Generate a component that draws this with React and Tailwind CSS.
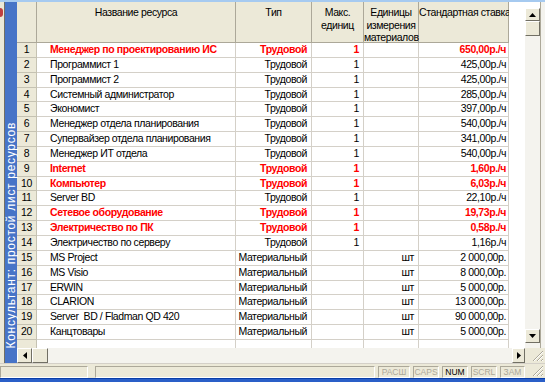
const rows = [
  ["Менеджер по проектированию ИС", "Трудовой", "1", "", "650,00р./ч", true],
  ["Программист 1", "Трудовой", "1", "", "425,00р./ч"],
  ["Программист 2", "Трудовой", "1", "", "425,00р./ч"],
  ["Системный администратор", "Трудовой", "1", "", "285,00р./ч"],
  ["Экономист", "Трудовой", "1", "", "397,00р./ч"],
  ["Менеджер отдела планирования", "Трудовой", "1", "", "540,00р./ч"],
  ["Супервайзер отдела планирования", "Трудовой", "1", "", "341,00р./ч"],
  ["Менеджер ИТ отдела", "Трудовой", "1", "", "540,00р./ч"],
  ["Internet", "Трудовой", "1", "", "1,60р./ч", true],
  ["Компьютер", "Трудовой", "1", "", "6,03р./ч", true],
  ["Server BD", "Трудовой", "1", "", "22,10р./ч"],
  ["Сетевое оборудование", "Трудовой", "1", "", "19,73р./ч", true],
  ["Электричество по ПК", "Трудовой", "1", "", "0,58р./ч", true],
  ["Электричество по серверу", "Трудовой", "1", "", "1,16р./ч"],
  ["MS Project", "Материальный", "", "шт", "2 000,00р."],
  ["MS Visio", "Материальный", "", "шт", "8 000,00р."],
  ["ERWIN", "Материальный", "", "шт", "5 000,00р."],
  ["CLARION", "Материальный", "", "шт", "13 000,00р."],
  ["Server  BD / Fladman QD 420", "Материальный", "", "шт", "90 000,00р."],
  ["Канцтовары", "Материальный", "", "шт", "5 000,00р."],
];

function Arrow({ dir }) {
  const pts = {
    up: "0,4 7,4 3.5,0",
    down: "0,0 7,0 3.5,4",
    left: "4,0 4,7 0,3.5",
    right: "0,0 0,7 4,3.5",
  }[dir];
  const vertical = dir === "up" || dir === "down";
  return (
    <svg width={vertical ? 7 : 4} height={vertical ? 4 : 7}>
      <polygon points={pts} fill="#000" />
    </svg>
  );
}

const raised =
  "bg-[#ece9d8] border-t border-l border-t-white border-l-white border-r border-b border-r-[#716f64] border-b-[#716f64]";
const sunken =
  "border-t border-l border-t-[#aca899] border-l-[#aca899] border-r border-b border-r-white border-b-white";

function Btn({ dir, className = "" }) {
  return (
    <div className={`flex items-center justify-center ${raised} ${className}`}>
      <Arrow dir={dir} />
    </div>
  );
}

function Grip() {
  return (
    <svg width="12" height="12" className="absolute right-[1px] bottom-[1px]">
      <path d="M11 1 L1 11 M11 5 L5 11 M11 9 L9 11" stroke="#aca899" strokeWidth="1" />
      <path d="M11 2 L2 11 M11 6 L6 11 M11 10 L10 11" stroke="#fff" strokeWidth="1" />
    </svg>
  );
}

const cell = "border-r border-b border-[#d4d0c8] h-full flex items-center whitespace-nowrap overflow-hidden";
const head = "bg-[#ece9d8] border-r border-b border-[#aca899] text-center pt-[4px] leading-[12.5px] whitespace-nowrap";

export default function App() {
  return (
    <div className="w-[545px] h-[382px] flex flex-col bg-[#ece9d8] overflow-hidden text-[10.5px] tracking-[-0.4px] text-black font-['Liberation_Sans',Arial,sans-serif]">
      <div className="h-[2px] bg-[#a6caf0]" />
      <div className="flex h-[361px]">
        <div className="w-[5px] border-r border-[#716f64] relative">
          <div className="absolute left-0 top-[6px] w-[3px] h-[9px] bg-[#c04040] rounded-r-sm" />
        </div>
        <div className="w-[12px] bg-[#4774c7] flex flex-col justify-end items-center pb-[15px]">
          <div className="[writing-mode:vertical-rl] rotate-180 text-white text-[12px] tracking-[0.7px] whitespace-nowrap leading-[12px]">
            Консультант: простой лист ресурсов
          </div>
        </div>
        <div className="w-[508px] flex flex-col">
          <div className="h-[346px] bg-white overflow-hidden">
            <div className="flex h-[41px]">
              <div className={`w-[20px] ${head}`} />
              <div className={`w-[199px] ${head}`}>Название ресурса</div>
              <div className={`w-[76px] ${head}`}>Тип</div>
              <div className={`w-[52px] ${head}`}>Макс.<br />единиц</div>
              <div className={`w-[55px] ${head}`}>Единицы<br />измерения<br />материалов</div>
              <div className={`w-[90px] ${head}`}>Стандартная ставка</div>
              <div className="flex-1 bg-white" />
            </div>
            {rows.map(([name, type, max, unit, rate, red], i) => {
              const tc = red ? "text-[#ff0000] font-bold" : "";
              return (
                <div key={i} className="flex h-[14.85px]">
                  <div className="w-[20px] bg-[#ece9d8] border-r border-b border-[#c5c2b2] h-full flex items-center justify-center">{i + 1}</div>
                  <div className={`w-[199px] pl-[13px] ${cell} ${tc}`}>{name.replace(/  /g, "\u00a0 ")}</div>
                  <div className={`w-[76px] justify-end pr-[4px] ${cell} ${tc}`}>{type}</div>
                  <div className={`w-[52px] justify-end pr-[4px] ${cell} ${tc}`}>{max}</div>
                  <div className={`w-[55px] justify-end pr-[4px] ${cell}`}>{unit}</div>
                  <div className={`w-[90px] justify-end pr-[2px] ${cell} ${tc}`}>{rate}</div>
                  <div className="flex-1" />
                </div>
              );
            })}
            <div className="flex h-[14.85px]">
              <div className="w-[20px] bg-[#ece9d8] border-r border-[#c5c2b2]" />
              <div className="w-[199px] border-r border-[#d4d0c8]" />
              <div className="w-[76px] border-r border-[#d4d0c8]" />
              <div className="w-[52px] border-r border-[#d4d0c8]" />
              <div className="w-[55px] border-r border-[#d4d0c8]" />
              <div className="w-[90px] border-r border-[#d4d0c8]" />
            </div>
          </div>
          <div className="h-[15px] flex bg-[#f4f3ee]">
            <Btn dir="left" className="w-[15px]" />
            <div className={`w-[16px] ${raised}`} />
            <div className="flex-1" />
            <Btn dir="right" className="w-[13px]" />
          </div>
        </div>
        <div className="w-[20px] flex flex-col">
          <div className="h-[346px] flex">
            <div className="w-[15px] flex flex-col bg-[#f4f3ee]">
              <div className="h-[6px] bg-white" />
              <Btn dir="up" className="h-[13px]" />
              <div className={`h-[15px] ${raised}`} />
              <div className="flex-1" />
              <Btn dir="down" className="h-[14px]" />
              <div className="h-[5px]" />
            </div>
            <div className="w-[5px] bg-[#f4f3ee] border-l border-[#aca899]" />
          </div>
          <div className="h-[15px] relative">
            <Grip />
          </div>
        </div>
      </div>
      <div className="h-[15px] flex items-stretch gap-[3px] pt-[2px] text-[8.5px] tracking-normal leading-none relative border-t border-[#d4d0c8]">
        <div className={`w-[88px] ${sunken}`} />
        <div className="w-[1px]" />
        <div className={`w-[280px] ${sunken}`} />
        {[["РАСШ", "w-[32px]"], ["CAPS", "w-[26px]"], ["NUM", "w-[26px]"], ["SCRL", "w-[26px]"], ["ЗАМ", "w-[25px]"]].map(([t, w]) => (
          <div
            key={t}
            className={`${w} flex items-center justify-center ${sunken} ${t === "NUM" ? "text-black" : "text-[#aca899]"}`}
          >
            {t}
          </div>
        ))}
        <Grip />
      </div>
      <div className="h-[4px] bg-[#2a5fc8] border-t border-[#0a3ea8]" />
    </div>
  );
}
